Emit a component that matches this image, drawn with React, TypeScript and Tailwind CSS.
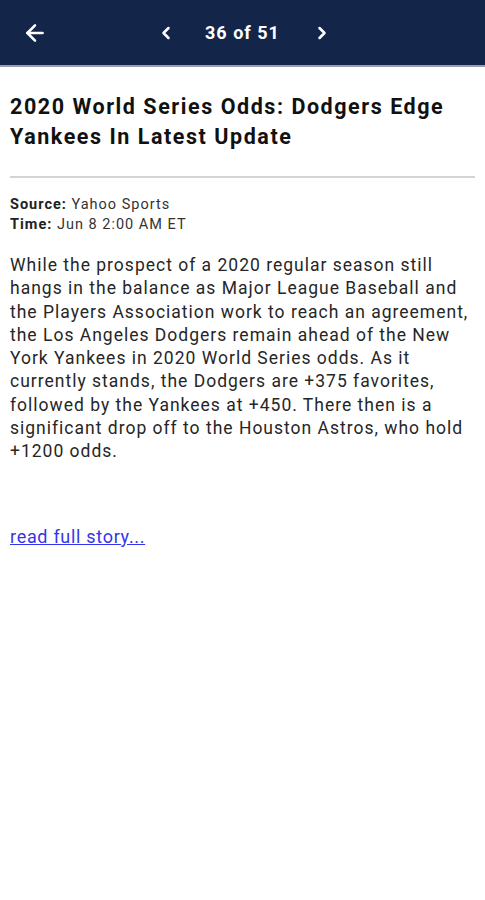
import { ArrowLeft, ChevronLeft, ChevronRight } from 'lucide-react';

export default function App() {
  return (
    <div className="min-h-[900px] w-[485px] bg-white font-['Roboto',sans-serif]">
      {/* Header bar */}
      <div className="flex h-[67px] items-center border-b-[2px] border-[#9aa0ab] bg-[#14254a] px-[22px] text-white">
        <ArrowLeft className="h-[26px] w-[26px]" strokeWidth={2.4} />
        <div className="ml-[108px] flex items-center">
          <ChevronLeft className="h-[20px] w-[20px]" strokeWidth={3} />
          <span className="ml-[29px] text-[18px] font-bold tracking-[1px]">36 of 51</span>
          <ChevronRight className="ml-[32px] h-[20px] w-[20px]" strokeWidth={3} />
        </div>
      </div>

      <div className="px-[10px] pt-[25px]">
        <h1 className="text-[21.5px] font-bold leading-[30px] tracking-[1.55px] text-[#111]">
          2020 World Series Odds: Dodgers Edge Yankees In Latest Update
        </h1>
        <div className="mt-[24px] h-[2px] bg-[#d4d4d4]" />

        <div className="mt-[17px] text-[14.5px] leading-[20px] tracking-[1px] text-[#333]">
          <div>
            <span className="font-bold text-[#222]">Source:</span> Yahoo Sports
          </div>
          <div>
            <span className="font-bold text-[#222]">Time:</span> Jun 8 2:00 AM ET
          </div>
        </div>

        <p className="mt-[19px] text-[17.5px] leading-[23.3px] tracking-[1px] text-[#262626]">
          While the prospect of a 2020 regular season still hangs in the balance as Major League
          Baseball and the Players Association work to reach an agreement, the Los Angeles Dodgers
          remain ahead of the New York Yankees in 2020 World Series odds. As it currently stands,
          the Dodgers are +375 favorites, followed by the Yankees at +450. There then is a
          significant drop off to the Houston Astros, who hold +1200 odds.
        </p>

        <a href="#" className="mt-[59px] inline-block text-[18px] tracking-[0.7px] text-[#3535e8] underline">
          read full story...
        </a>
      </div>
    </div>
  );
}
